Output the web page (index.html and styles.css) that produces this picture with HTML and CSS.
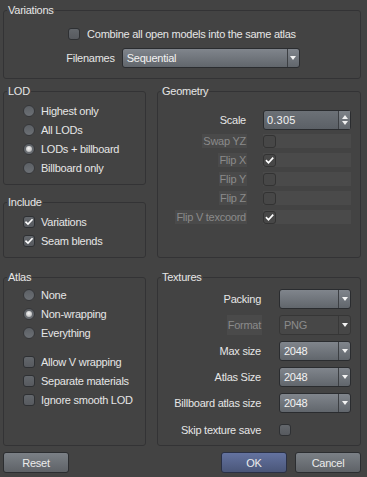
FILE: index.html
```html
<!DOCTYPE html>
<html>
<head>
<meta charset="utf-8">
<link rel="stylesheet" href="styles.css">
</head>
<body>
<div class="dialog">
  <fieldset class="group">
    <legend>Variations</legend>
    <div class="body variations">
      <div class="opt"><span class="box"></span><span>Combine all open models into the same atlas</span></div>
      <div class="filenames">
        <span>Filenames</span>
        <div class="combo wide"><span class="val">Sequential</span><span class="arrow"></span></div>
      </div>
    </div>
  </fieldset>

  <div class="grid">
    <div class="col">
      <fieldset class="group">
        <legend>LOD</legend>
        <div class="body list lod">
          <div class="opt"><span class="radio"></span><span>Highest only</span></div>
          <div class="opt"><span class="radio"></span><span>All LODs</span></div>
          <div class="opt"><span class="radio on"></span><span>LODs + billboard</span></div>
          <div class="opt"><span class="radio"></span><span>Billboard only</span></div>
        </div>
      </fieldset>
      <fieldset class="group include">
        <legend>Include</legend>
        <div class="body list lod">
          <div class="opt"><span class="box checked"><svg viewBox="0 0 12 12"><path d="M2.5 6.3 L4.8 8.6 L9.6 3.4"/></svg></span><span>Variations</span></div>
          <div class="opt"><span class="box checked"><svg viewBox="0 0 12 12"><path d="M2.5 6.3 L4.8 8.6 L9.6 3.4"/></svg></span><span>Seam blends</span></div>
        </div>
      </fieldset>
    </div>

    <fieldset class="group">
      <legend>Geometry</legend>
      <div class="body form geometry">
        <span class="lbl">Scale</span>
        <div class="spin"><span class="val">0.305</span><span class="spinbtn"><i class="up"></i><i class="down"></i></span></div>
        <span class="lbl off">Swap YZ</span>
        <div class="cbfield"><span class="dbox"></span></div>
        <span class="lbl off">Flip X</span>
        <div class="cbfield"><span class="dbox"><svg viewBox="0 0 13 13"><path d="M3 6.8 L5.3 9.1 L10.2 3.8"/></svg></span></div>
        <span class="lbl off">Flip Y</span>
        <div class="cbfield"><span class="dbox"></span></div>
        <span class="lbl off">Flip Z</span>
        <div class="cbfield"><span class="dbox"></span></div>
        <span class="lbl off">Flip V texcoord</span>
        <div class="cbfield"><span class="dbox"><svg viewBox="0 0 13 13"><path d="M3 6.8 L5.3 9.1 L10.2 3.8"/></svg></span></div>
      </div>
    </fieldset>

    <fieldset class="group">
      <legend>Atlas</legend>
      <div class="body list atlas">
        <div class="opt"><span class="radio"></span><span>None</span></div>
        <div class="opt"><span class="radio on"></span><span>Non-wrapping</span></div>
        <div class="opt"><span class="radio"></span><span>Everything</span></div>
        <div class="opt sep"><span class="box"></span><span>Allow V wrapping</span></div>
        <div class="opt"><span class="box"></span><span>Separate materials</span></div>
        <div class="opt"><span class="box"></span><span>Ignore smooth LOD</span></div>
      </div>
    </fieldset>

    <fieldset class="group">
      <legend>Textures</legend>
      <div class="body form textures">
        <span class="lbl">Packing</span>
        <div class="combo"><span class="val"></span><span class="arrow"></span></div>
        <span class="lbl off tall">Format</span>
        <div class="combo disabled"><span class="val">PNG</span><span class="arrow"></span></div>
        <span class="lbl">Max size</span>
        <div class="combo"><span class="val">2048</span><span class="arrow"></span></div>
        <span class="lbl">Atlas Size</span>
        <div class="combo"><span class="val">2048</span><span class="arrow"></span></div>
        <span class="lbl">Billboard atlas size</span>
        <div class="combo"><span class="val">2048</span><span class="arrow"></span></div>
        <span class="lbl skip">Skip texture save</span>
        <div class="skipfield"><span class="box"></span></div>
      </div>
    </fieldset>
  </div>

  <div class="buttons">
    <button class="btn">Reset</button>
    <span class="spacer"></span>
    <button class="btn primary">OK</button>
    <button class="btn">Cancel</button>
  </div>
</div>
</body>
</html>
```

FILE: styles.css
```css
* { box-sizing: border-box; }
html, body { margin: 0; padding: 0; background: #434343; }
body {
  font-family: "Liberation Sans", Arial, sans-serif;
  font-size: 11px;
  letter-spacing: -0.25px;
  color: #e6e6e6;
}
.dialog {
  width: 367px;
  height: 477px;
  padding: 4px 6px 0 3px;
}
.group {
  margin: 0;
  padding: 0;
  border: 1px solid #333335;
  border-radius: 3px;
  min-width: 0;
}
.group legend {
  margin-left: 3px;
  padding: 0 1px;
  height: 13px;
  line-height: 13px;
}
.body { padding: 7px 0 10px; }

/* variations */
.variations {
  display: flex;
  flex-direction: column;
  align-items: center;
  gap: 5px;
}
.opt {
  display: flex;
  align-items: center;
  gap: 7px;
  height: 19px;
  white-space: nowrap;
}
.filenames {
  display: flex;
  align-items: center;
  gap: 7px;
  height: 20px;
  margin-right: -2px;
}

.box {
  width: 12px;
  height: 12px;
  flex: none;
  border: 1px solid #2e3033;
  border-radius: 3px;
  background: linear-gradient(#63676c, #575a5f);
  display: flex;
  align-items: center;
  justify-content: center;
}
.box svg, .dbox svg {
  width: 100%;
  height: 100%;
  display: block;
}
.box svg path, .dbox svg path {
  fill: none;
  stroke: #ffffff;
  stroke-width: 2;
  stroke-linecap: square;
}
.radio {
  width: 12px;
  height: 12px;
  flex: none;
  border-radius: 50%;
  border: 1px solid #36373a;
  background: linear-gradient(#5c6065, #6c7075);
  display: flex;
  align-items: center;
  justify-content: center;
}
.radio.on::after {
  content: "";
  width: 6px;
  height: 6px;
  border-radius: 50%;
  background: radial-gradient(circle at 45% 40%, #f4f4f4 0, #d4d4d4 45%, #9a9c9f 100%);
}

/* grid */
.grid {
  display: grid;
  grid-template-columns: 143px 204px;
  column-gap: 11px;
  row-gap: 13px;
  margin-top: 6px;
}
.col { display: flex; flex-direction: column; }
.include { margin-top: 11px; flex: 1; }
.list { display: flex; flex-direction: column; padding: 3px 0 7px 19px; }
.list .opt { gap: 6px; }
.atlas { padding-top: 1px; }
.atlas .sep { margin-top: 10px; }

/* forms */
.form {
  display: grid;
  align-items: center;
  padding-left: 18px;
}
.geometry {
  grid-template-columns: 71px 88px;
  column-gap: 16px;
  grid-template-rows: 20px repeat(5, 14px);
  row-gap: 5px;
  padding-top: 11px;
  padding-bottom: 6px;
}
.geometry > :nth-child(1), .geometry > :nth-child(2) { margin-bottom: -1px; }
.textures {
  grid-template-columns: 86px 72px;
  column-gap: 17px;
  grid-template-rows: repeat(5, 20px) 20px;
  row-gap: 6px;
  padding-top: 5px;
  padding-bottom: 6px;
}
.textures .skip, .textures .skipfield { margin-top: 2px; }
.lbl {
  justify-self: end;
  white-space: nowrap;
  padding-right: 1px;
  line-height: 14px;
}
.lbl.off {
  color: #8b8b8b;
  background: #4a4a4a;
  padding-left: 1px;
}
.lbl.tall { line-height: 20px; height: 20px; }

.cbfield {
  height: 14px;
  background: #4a4a4a;
  display: flex;
  align-items: center;
}
.dbox {
  width: 13px;
  height: 13px;
  border: 1px solid #333333;
  border-radius: 3px;
  background: #474747;
}
.skipfield { display: flex; align-items: center; }

/* combo */
.combo {
  height: 20px;
  display: flex;
  border: 1px solid #2a2c2f;
  border-radius: 3px;
  background: linear-gradient(#80858c, #61666c);
  color: #f2f2f2;
}
.combo.wide { width: 178px; }
.combo .val {
  flex: 1;
  padding-left: 4px;
  line-height: 18px;
}
.combo .arrow {
  width: 12px;
  border-left: 1px solid #3c3f43;
  display: flex;
  align-items: center;
  justify-content: center;
}
.combo .arrow::after {
  content: "";
  width: 0;
  height: 0;
  border-left: 3.5px solid transparent;
  border-right: 3.5px solid transparent;
  border-top: 4px solid #f4f4f4;
}
.combo.disabled {
  background: #474747;
  border-color: #363636;
  color: #8b8b8b;
}
.combo.disabled .arrow { border-left-color: #383838; }

/* spin */
.spin {
  height: 20px;
  display: flex;
  border: 1px solid #2a2c2f;
  border-radius: 3px;
  background: linear-gradient(#6c7177, #5b6066);
  color: #f2f2f2;
  letter-spacing: 0.2px;
}
.spin .val { flex: 1; padding-left: 3px; line-height: 18px; }
.spinbtn {
  width: 12px;
  border-left: 1px solid #3c3f43;
  background: linear-gradient(#7d8288, #62676d);
  display: flex;
  flex-direction: column;
  align-items: center;
  justify-content: center;
  gap: 2px;
}
.spinbtn i { display: block; width: 0; height: 0; border-left: 3.5px solid transparent; border-right: 3.5px solid transparent; }
.spinbtn .up { border-bottom: 4px solid #f0f0f0; }
.spinbtn .down { border-top: 4px solid #f0f0f0; }

/* buttons */
.buttons {
  display: flex;
  gap: 8px;
  margin-top: 6px;
}
.spacer { flex: 1; }
.btn {
  width: 66px;
  height: 21px;
  padding: 0;
  font: inherit;
  letter-spacing: inherit;
  color: #ececec;
  border: 1px solid #2b2d30;
  border-radius: 3px;
  background: linear-gradient(#7b8086, #5e6267);
}
.btn.primary {
  background: linear-gradient(#6473a0, #4a5679);
  border-color: #2a3044;
}
```
